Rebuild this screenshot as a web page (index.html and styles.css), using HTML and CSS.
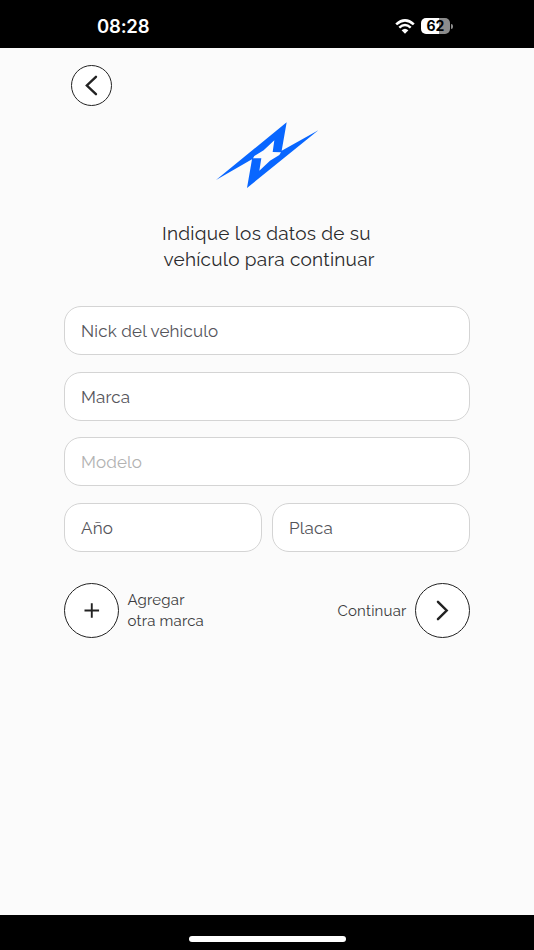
FILE: index.html
```html
<!DOCTYPE html>
<html lang="es">
<head>
    <meta charset="utf-8">
    <meta name="viewport" content="width=device-width, initial-scale=1">
    <title>Datos del vehículo</title>
    <link rel="stylesheet" href="styles.css">
</head>
<body>
    <div class="status">
        <span class="time">08:28</span>
        <div class="status-icons">
            <svg class="wifi" viewBox="0 0 20 15">
                <path d="M1.2 5.4Q10-2.6 18.8 5.4" stroke-width="2.6"/>
                <path d="M4.3 8.6Q10 3.4 15.7 8.6" stroke-width="2.5"/>
                <path class="dot" d="M6.6 11.3Q10 8.3 13.4 11.3L10 14.8Z"/>
            </svg>
            <div class="battery">62</div>
            <div class="battery-tip"></div>
        </div>
    </div>
    <main class="page">
        <button class="round back" type="button" aria-label="Volver">
            <svg viewBox="0 0 42 42"><path d="M25.8 11.6L16 21L25.8 30.4"/></svg>
        </button>
        <svg class="logo" viewBox="0 0 375 270">
            <path fill-rule="evenodd" d="M33 210L245 37L230 122L340 61L126 234L141 148ZM208 91L176 121L148 138L144 145L169 145L163 182L195 152L223 135L228 127L203 126Z"/>
        </svg>
        <h1 class="title">
            <span class="line1">Indique los datos de su</span>
            <span class="line2">vehículo para continuar</span>
        </h1>
        <form class="form">
            <div class="field">Nick del vehiculo</div>
            <div class="field">Marca</div>
            <div class="field disabled">Modelo</div>
            <div class="row">
                <div class="field">Año</div>
                <div class="field">Placa</div>
            </div>
        </form>
        <div class="actions">
            <div class="action">
                <button class="round big" type="button" aria-label="Agregar otra marca">
                    <svg viewBox="0 0 56 56"><path class="plus" d="M28.3 20.3V35.7M20.6 28H36"/></svg>
                </button>
                <p class="label">Agregar<br>otra marca</p>
            </div>
            <div class="action">
                <p class="label">Continuar</p>
                <button class="round big" type="button" aria-label="Continuar">
                    <svg viewBox="0 0 56 56"><path d="M23.2 18.9L32.4 28L23.2 37.1"/></svg>
                </button>
            </div>
        </div>
    </main>
    <div class="home"><div class="home-bar"></div></div>
</body>
</html>
```
FILE: styles.css
```css
* {
    margin: 0;
    padding: 0;
    box-sizing: border-box;
}
body {
    height: 950px;
    display: flex;
    flex-direction: column;
    overflow: hidden;
    background: #000;
    font-family: Raleway, Lato, sans-serif;
}
.status {
    height: 48px;
    padding: 4px 81px 0 97px;
    display: flex;
    align-items: center;
    justify-content: space-between;
    color: #fff;
    font-family: Inter, sans-serif;
}
.time {
    font-size: 18.5px;
    font-weight: 600;
    letter-spacing: -0.2px;
}
.status-icons {
    display: flex;
    align-items: center;
}
.wifi {
    width: 20px;
    height: 15px;
    margin-right: 6px;
    fill: none;
    stroke: #fff;
}
.wifi .dot {
    fill: #fff;
    stroke: none;
}
.battery {
    width: 29px;
    height: 16px;
    border-radius: 5px;
    background: linear-gradient(to right, #fff 62%, #8c8c8c 62%);
    color: #000;
    font-size: 14px;
    font-weight: 700;
    line-height: 16px;
    text-align: center;
}
.battery-tip {
    width: 2px;
    height: 5px;
    margin-left: 1px;
    border-radius: 0 2px 2px 0;
    background: #8c8c8c;
}
.page {
    height: 867px;
    padding: 17px 64px 0;
    background: #fbfbfb;
    color: #2b2b2d;
}
.round {
    display: block;
    border: 1.5px solid #222;
    border-radius: 50%;
    background: #fff;
}
.round svg {
    display: block;
    width: 100%;
    height: 100%;
    overflow: visible;
    fill: none;
    stroke: #222;
    stroke-width: 2.6;
    stroke-linecap: round;
}
.back {
    width: 41px;
    height: 41px;
    margin-left: 7px;
}
.logo {
    display: block;
    width: 125px;
    height: 90px;
    margin: 4px 0 0 141px;
    fill: #0866ff;
}
.title {
    margin-top: 20px;
    font-size: 19px;
    font-weight: 400;
    line-height: 26px;
}
.title span {
    display: block;
    width: max-content;
    letter-spacing: 0.24px;
}
.line1 {
    margin-left: 98px;
}
.line2 {
    margin-left: 99.5px;
}
.form {
    margin-top: 34px;
    display: flex;
    flex-direction: column;
    gap: 16.6px;
}
.row {
    display: grid;
    grid-template-columns: 1fr 1fr;
    gap: 10px;
}
.field {
    height: 49px;
    padding-left: 16px;
    border: 1px solid #d4d4d4;
    border-radius: 17px;
    background: #fff;
    color: #55555b;
    font-size: 17px;
    line-height: 48px;
    letter-spacing: 0.16px;
}
.disabled {
    color: #b2b2b2;
}
.actions {
    margin-top: 31px;
    display: flex;
    justify-content: space-between;
}
.action {
    display: flex;
    align-items: center;
    gap: 8.5px;
}
.big {
    width: 55px;
    height: 55px;
}
.round .plus {
    stroke-width: 2;
    stroke-linecap: butt;
}
.label {
    padding-top: 1px;
    color: #3c3c3e;
    font-size: 15px;
    line-height: 20.5px;
    letter-spacing: 0.2px;
}
.home {
    height: 35px;
    padding-top: 21px;
}
.home-bar {
    width: 157px;
    height: 6px;
    margin: 0 auto;
    border-radius: 3px;
    background: #fff;
}
```
